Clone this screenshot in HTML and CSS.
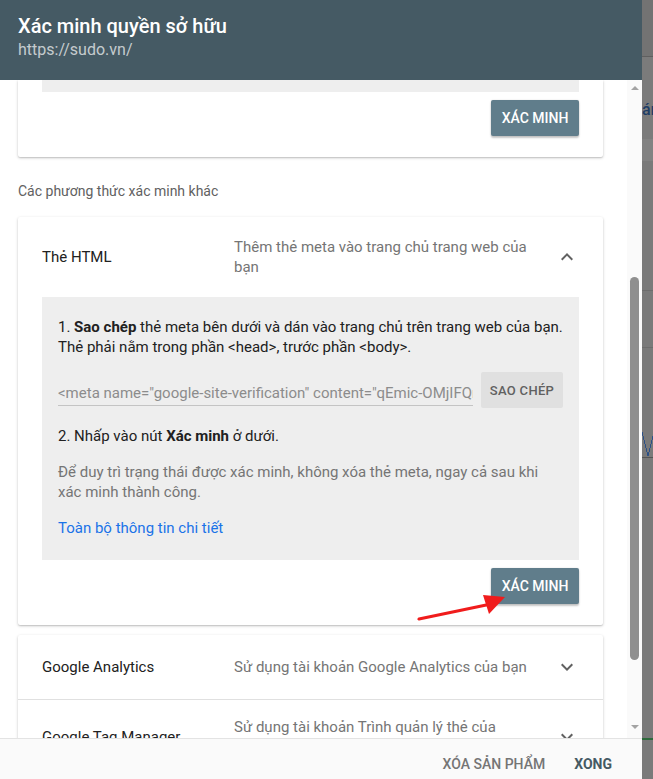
FILE: index.html
```html
<!DOCTYPE html>
<html lang="vi">
<head>
<meta charset="utf-8">
<title>Xác minh quyền sở hữu</title>
<link rel="stylesheet" href="styles.css">
</head>
<body>
<div class="screen">
  <div class="dialog">
    <header class="dlg-head">
      <h1 class="dlg-title">Xác minh quyền sở hữu</h1>
      <div class="dlg-url">https://sudo.vn/</div>
    </header>
    <div class="dlg-body">
      <div class="scroll-content">
        <section class="card card-top">
          <div class="panel panel-cut"></div>
          <div class="actions"><button class="btn-primary">XÁC MINH</button></div>
        </section>

        <div class="section-label">Các phương thức xác minh khác</div>

        <section class="card card-html">
          <div class="method-row">
            <div class="method-name">Thẻ HTML</div>
            <div class="method-desc">Thêm thẻ meta vào trang chủ trang web của bạn</div>
            <svg class="chev" viewBox="0 0 24 24" width="24" height="24"><path d="M12 8l-6 6 1.41 1.41L12 10.83l4.59 4.58L18 14z"/></svg>
          </div>
          <div class="panel">
            <p class="step">1. <b>Sao chép</b> thẻ meta bên dưới và dán vào trang chủ trên trang web của bạn. Thẻ phải nằm trong phần &lt;head&gt;, trước phần &lt;body&gt;.</p>
            <div class="copy-row">
              <input class="meta-input" type="text" readonly value='&lt;meta name="google-site-verification" content="qEmic-OMjIFQr8s2vT0dLkE5nW" /&gt;'>
              <button class="btn-flat">SAO CHÉP</button>
            </div>
            <p class="step step2">2. Nhấp vào nút <b>Xác minh</b> ở dưới.</p>
            <p class="note">Để duy trì trạng thái được xác minh, không xóa thẻ meta, ngay cả sau khi xác minh thành công.</p>
            <a class="details" href="#">Toàn bộ thông tin chi tiết</a>
          </div>
          <div class="actions"><button class="btn-primary">XÁC MINH</button></div>
        </section>

        <section class="card card-list">
          <div class="method-row single">
            <div class="method-name">Google Analytics</div>
            <div class="method-desc">Sử dụng tài khoản Google Analytics của bạn</div>
            <svg class="chev" viewBox="0 0 24 24" width="24" height="24"><path d="M16.59 8.59L12 13.17 7.41 8.59 6 10l6 6 6-6z"/></svg>
          </div>
          <div class="method-row divided">
            <div class="method-name">Google Tag Manager</div>
            <div class="method-desc">Sử dụng tài khoản Trình quản lý thẻ của Google</div>
            <svg class="chev" viewBox="0 0 24 24" width="24" height="24"><path d="M16.59 8.59L12 13.17 7.41 8.59 6 10l6 6 6-6z"/></svg>
          </div>
        </section>
      </div>
      <div class="scrollbar">
        <span class="sb-arrow sb-up"></span>
        <div class="sb-track"><div class="sb-thumb"></div></div>
        <span class="sb-arrow sb-down"></span>
      </div>
    </div>
    <footer class="dlg-foot">
      <button class="btn-text">XÓA SẢN PHẨM</button>
      <button class="btn-text btn-done">XONG</button>
    </footer>
  </div>
  <div class="backdrop">
    <div class="bd-a"></div>
    <div class="bd-b"></div>
    <div class="bd-text">án</div>
    <div class="bd-c"></div>
    <div class="bd-band"></div>
    <div class="bd-d"></div>
    <div class="bd-e"></div>
    <div class="bd-chart"></div>
    <div class="bd-f"></div>
    <div class="bd-g"></div>
  </div>
</div>
<svg class="annot-arrow" width="100" height="30" viewBox="0 0 100 30">
  <line x1="2" y1="27" x2="74" y2="12" stroke="#f01c1c" stroke-width="3" stroke-linecap="round"/>
  <polygon points="88,5 66,3 72,22" fill="#f01c1c"/>
</svg>
</body>
</html>
```

FILE: styles.css
```css
* { box-sizing: border-box; }
html, body { margin: 0; padding: 0; }
body {
  font-family: Roboto, "Noto Sans", "Liberation Sans", sans-serif;
  color: #212121;
  overflow: hidden;
  position: relative;
  width: 653px;
  height: 779px;
}
.screen {
  display: flex;
  height: 779px;
  overflow: hidden;
}
.dialog {
  width: 642px;
  flex-shrink: 0;
  height: 790px;
  display: flex;
  flex-direction: column;
  background: #fff;
}
.dlg-head {
  height: 80px;
  flex-shrink: 0;
  background: #455a64;
  color: #fff;
  padding: 14px 18px 0;
}
.dlg-title {
  margin: 0;
  font-size: 20px;
  line-height: 24px;
  font-weight: 500;
}
.dlg-url {
  margin-top: 2px;
  font-size: 16px;
  line-height: 20px;
  color: rgba(255,255,255,0.7);
}
.dlg-body {
  flex: 1;
  display: flex;
  min-height: 0;
  overflow: hidden;
}
.scroll-content {
  flex: 1;
  padding: 0 24px 0 18px;
  overflow: hidden;
}
.card {
  background: #fff;
  box-shadow: 0 1px 3px rgba(0,0,0,0.22), 0 1px 1px rgba(0,0,0,0.08);
  border-radius: 2px;
}
.card-top {
  padding: 0 24px 21px;
  border-radius: 0 0 2px 2px;
}
.panel {
  background: #eeeeee;
}
.panel-cut { height: 12px; }
.actions {
  display: flex;
  justify-content: flex-end;
  margin-top: 8px;
}
.btn-primary {
  font-family: inherit;
  border: none;
  background: #607d8b;
  color: #fff;
  font-size: 14px;
  font-weight: 500;
  height: 36px;
  width: 88px;
  padding: 0;
  border-radius: 2px;
  box-shadow: 0 2px 2px rgba(0,0,0,0.22), 0 0 2px rgba(0,0,0,0.12);
}
.section-label {
  margin: 24px 0 16px;
  font-size: 14px;
  line-height: 20px;
  color: #616161;
}
.card-html {
  padding: 0 24px 21px;
}
.method-row {
  display: grid;
  grid-template-columns: 192px 1fr 24px;
  align-items: center;
  padding: 20px 0;
  font-size: 15px;
  line-height: 20px;
}
.card-list .method-row { padding: 20px 24px; }
.method-row.divided {
  border-top: 1px solid #e0e0e0;
  padding-top: 17px;
}
.method-name { color: #212121; }
.method-desc {
  color: #757575;
  padding-right: 14px;
}
.chev { fill: #616161; }
.panel:not(.panel-cut) {
  padding: 20px 16px 22px;
  font-size: 15px;
  line-height: 20px;
}
.step { margin: 0; }
.step b { font-weight: 700; }
.copy-row {
  display: flex;
  align-items: center;
  gap: 8px;
  margin-top: 15px;
}
.meta-input {
  flex: 1;
  min-width: 0;
  font-family: inherit;
  font-size: 15px;
  color: #8c8c8c;
  background: transparent;
  border: none;
  border-bottom: 1px solid #c4c4c4;
  padding: 6px 0 3px;
  margin-top: 4px;
  outline: none;
}
.btn-flat {
  font-family: inherit;
  border: none;
  background: #e0e0e0;
  color: #616161;
  font-size: 13px;
  font-weight: 500;
  letter-spacing: 0.3px;
  width: 82px;
  height: 36px;
  padding: 0;
  border-radius: 2px;
}
.step2 { margin-top: 18px; }
.note {
  margin: 16px 0 0;
  color: #757575;
}
.details {
  display: block;
  margin-top: 16px;
  color: #1a73e8;
  text-decoration: none;
}
.card-list { margin-top: 10px; }

.scrollbar {
  width: 15px;
  flex-shrink: 0;
  background: #fafafa;
  display: flex;
  flex-direction: column;
  align-items: center;
}
.sb-arrow {
  width: 0; height: 0;
  border-left: 4px solid transparent;
  border-right: 4px solid transparent;
}
.sb-up { border-bottom: 4px solid #a3a3a3; margin-top: 6px; }
.sb-down { border-top: 4px solid #a3a3a3; margin-bottom: 9px; }
.sb-track {
  flex: 1;
  width: 100%;
  display: flex;
  justify-content: center;
  padding-top: 187px;
}
.sb-thumb {
  width: 9px;
  height: 383px;
  border-radius: 5px;
  background: #8f8f8f;
}

.dlg-foot {
  height: 52px;
  flex-shrink: 0;
  background: #fafafa;
  border-top: 1px solid #e3e3e3;
  display: flex;
  justify-content: flex-end;
  align-items: flex-start;
  padding: 7px 22px 0 0;
  gap: 13px;
}
.btn-text {
  font-family: inherit;
  border: none;
  background: transparent;
  height: 36px;
  padding: 0 8px;
  font-size: 14px;
  font-weight: 500;
  color: #757575;
}
.btn-done { color: #455a64; font-weight: 700; }

.backdrop {
  flex: 1;
  background: #7a7a7a;
  display: flex;
  flex-direction: column;
  overflow: hidden;
}
.bd-a { height: 57px; background: #737373; border-bottom: 1px solid #5f5f5f; }
.bd-b { height: 40px; background: #7b7b7b; }
.bd-text { height: 26px; color: #1e3d66; font-size: 16px; line-height: 26px; font-weight: 500; white-space: nowrap; background: #7b7b7b; }
.bd-c { height: 16px; background: #7b7b7b; }
.bd-band { height: 22px; background: #828282; }
.bd-d { height: 130px; border-bottom: 1px solid #6d6d6d; }
.bd-e { height: 57px; border-bottom: 1px solid #6d6d6d; }
.bd-chart {
  height: 110px;
  border-bottom: 1px solid #555;
  background: linear-gradient(to top right, transparent 46%, #2a4f86 47%, #2a4f86 53%, transparent 54%) no-repeat 0 84px / 6px 24px,
              linear-gradient(to bottom right, transparent 46%, #2a4f86 47%, #2a4f86 53%, transparent 54%) no-repeat 6px 84px / 6px 24px;
}
.bd-f { height: 280px; }
.bd-g { height: 2px; background: #2d6a3c; }

.annot-arrow {
  position: absolute;
  left: 417px;
  top: 592px;
}
```
